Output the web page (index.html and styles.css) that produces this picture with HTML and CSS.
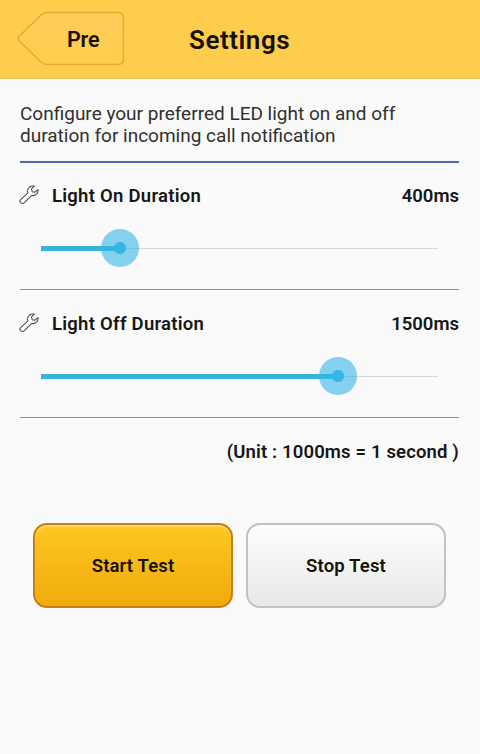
FILE: index.html
```html
<!DOCTYPE html>
<html lang="en">
<head>
<meta charset="utf-8">
<title>Settings</title>
<link rel="stylesheet" href="styles.css">
</head>
<body>
<header class="topbar">
  <a class="back">
    <svg class="back-shape" width="110" height="56" viewBox="0 0 110 56">
      <defs><linearGradient id="bk" x1="0" y1="0" x2="0" y2="1"><stop offset="0" stop-color="#ffcc5c"/><stop offset="1" stop-color="#ffce4b"/></linearGradient></defs>
      <path d="M31 2.500H102Q107.500 2.500 107.500 8V49Q107.500 54.500 102 54.500H31Q28 54.500 25 52L3 30.500Q1 28.500 3 26.500L25 5Q28 2.500 31 2.500Z" fill="url(#bk)" stroke="#e0ac30" stroke-width="1.400"/>
    </svg>
    <span class="back-label">Pre</span>
  </a>
  <h1 class="title">Settings</h1>
</header>
<main class="content">
  <p class="intro">Configure your preferred LED light on and off<br>duration for incoming call notification</p>
  <section class="setting">
    <div class="row">
      <svg class="wrench" width="21" height="21" viewBox="0 0 22 22"><path d="M1.700 16.300L9.300 9.300C8.100 6.200 10.200 2.100 14.700 1.900L16.200 2.300L13.100 5.200L13.800 8L16.500 8.700L19.900 5.700C20.500 9 17.800 12.700 13.100 12.100L5.700 19.500C4.400 20.700 2.800 20.500 1.800 19.500C.8 18.500 .7 17.300 1.700 16.300Z"/></svg>
      <span class="label">Light On Duration</span>
      <span class="value">400ms</span>
    </div>
    <div class="slider"><div class="fill" style="width:79px"></div><div class="thumb"></div><div class="rest"></div></div>
  </section>
  <section class="setting">
    <div class="row">
      <svg class="wrench" width="21" height="21" viewBox="0 0 22 22"><path d="M1.700 16.300L9.300 9.300C8.100 6.200 10.200 2.100 14.700 1.900L16.200 2.300L13.100 5.200L13.800 8L16.500 8.700L19.900 5.700C20.500 9 17.800 12.700 13.100 12.100L5.700 19.500C4.400 20.700 2.800 20.500 1.800 19.500C.8 18.500 .7 17.300 1.700 16.300Z"/></svg>
      <span class="label">Light Off Duration</span>
      <span class="value">1500ms</span>
    </div>
    <div class="slider"><div class="fill" style="width:297px"></div><div class="thumb"></div><div class="rest"></div></div>
  </section>
  <p class="unit">(Unit : 1000ms = 1 second )</p>
  <div class="actions">
    <button class="btn start">Start Test</button>
    <button class="btn stop">Stop Test</button>
  </div>
</main>
</body>
</html>
```
FILE: styles.css
```css
* { box-sizing: border-box; }
body {
  margin: 0;
  min-height: 754px;
  background: #fafafa;
  color: #161616;
  font-family: Roboto, "Liberation Sans", sans-serif;
}
.topbar {
  display: flex;
  height: 79px;
  padding: 10px 0 0 16px;
  background: #ffcd4d;
  border-bottom: 1px solid #eac468;
  color: #171000;
}
.back { display: grid; width: 110px; height: 56px; }
.back-shape, .back-label { grid-area: 1 / 1; }
.back-label {
  padding-left: 51px;
  font-size: 21.5px;
  font-weight: 600;
  letter-spacing: -.2px;
  line-height: 60px;
}
.title {
  margin: 0 0 0 63px;
  font-size: 26px;
  font-weight: 600;
  letter-spacing: .55px;
  line-height: 60px;
  white-space: nowrap;
}
.content { padding: 24px 21px 0 20px; }
.intro {
  margin: 0 0 -1px;
  height: 60px;
  border-bottom: 2px solid #5268ae;
  color: #303030;
  font-size: 19px;
  line-height: 22px;
  white-space: nowrap;
}
.setting { height: 128px; border-bottom: 1px solid #8d8fc0; }
.row {
  display: flex;
  align-items: center;
  height: 66px;
  padding-top: 2px;
  font-size: 18.5px;
  font-weight: 600;
}
.wrench { flex: none; margin: -3px 12px 0 -1px; fill: #fafafa; stroke: #4c4c4c; stroke-width: 1.1; stroke-linejoin: round; }
.label { letter-spacing: .26px; }
.value { margin-left: auto; }
.slider {
  display: flex;
  align-items: center;
  height: 40px;
  margin: 0 21px;
}
.fill { flex: none; height: 5px; background: #38b3dc; }
.thumb {
  position: relative;
  flex: none;
  width: 38px;
  height: 38px;
  margin: 0 -19px;
  border-radius: 50%;
  background: radial-gradient(circle, #33b5e5 5.5px, #33b5e599 6.5px);
}
.rest { flex: 1; height: 1px; background: #d8d8d8; }
.unit {
  margin: 0;
  padding-top: 1px;
  font-size: 18.5px;
  font-weight: 600;
  letter-spacing: .15px;
  line-height: 67px;
  text-align: right;
}
.actions { display: flex; gap: 13px; margin: 37px 0 0 13px; }
.btn {
  width: 200px;
  height: 85px;
  padding: 1px 0 0;
  border: 2px solid;
  border-radius: 14px;
  color: #171208;
  font: 600 18.5px Roboto, "Liberation Sans", sans-serif;
  letter-spacing: .15px;
}
.start { border-color: #cb7d13; background: linear-gradient(#fdc722, #f0aa0c); box-shadow: inset 0 2px 1px #ffdb67; }
.stop { border-color: #c2c2c2; background: linear-gradient(#fefefe, #e8e8e8); }
```
